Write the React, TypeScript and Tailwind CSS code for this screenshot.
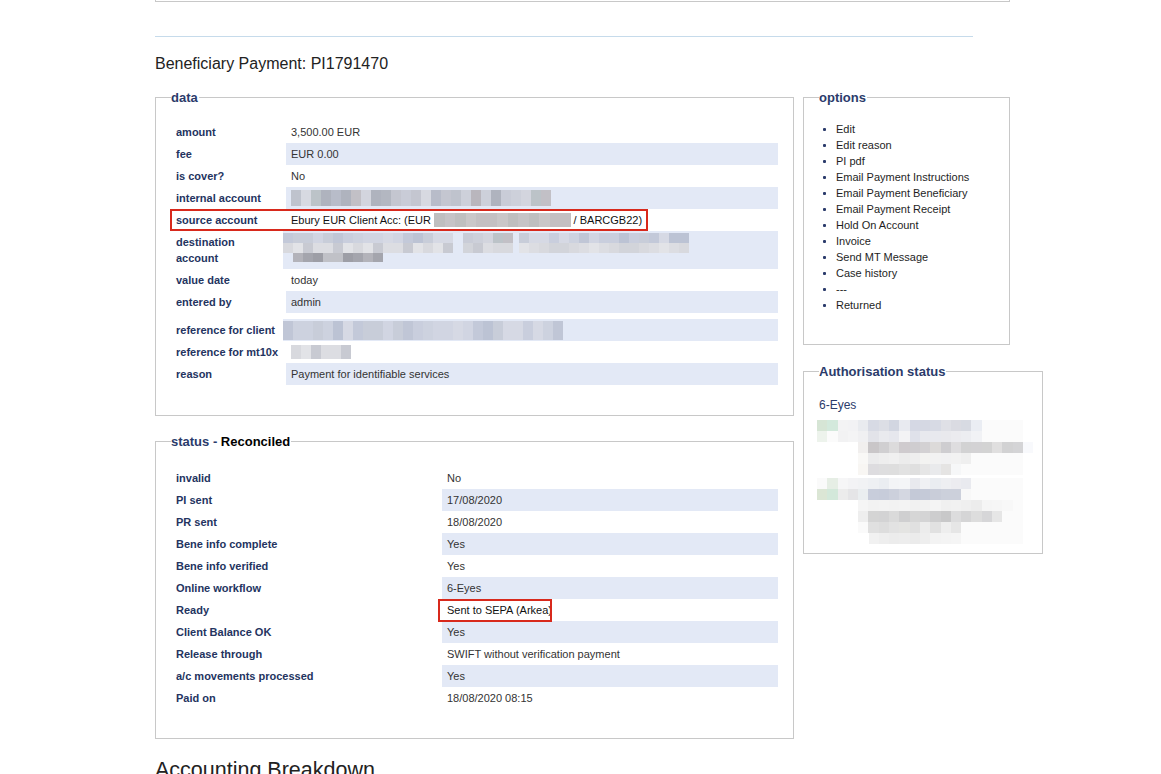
import React from 'react'

const greys = ['#c9ccd7', '#b8bcc9', '#d3d5de', '#bfc3cd', '#b3b7c1', '#bcc3c8', '#cdd0da', '#c4c6d0', '#afb3be', '#d7d9e1', '#c2c0c6', '#b9b6bd']
const blues = ['#c9cedd', '#c3c9d9', '#d1d5e2', '#bcc3d4', '#cdd2df', '#d6d9e4', '#c0c6d6', '#c8cdd9']
const warm = ['#c4c0c2', '#bdbabb', '#cac7c8', '#b7b6b9', '#d0cecf', '#c6c4c6', '#bfbfbf']
const light = ['#dcdde2', '#d2d4da', '#c8cad2', '#d8d9de', '#e2e3e7']

// pixelated "redacted" strip
function Pix({ n, cw = 10, h = 14, seed = 0, colors = greys }: { n: number; cw?: number; h?: number; seed?: number; colors?: string[] }) {
  return (
    <span className="inline-flex align-middle">
      {Array.from({ length: n }, (_, i) => (
        <span key={i} style={{ width: cw, height: h, background: colors[(i * 5 + seed * 3 + ((i * i) % 7)) % colors.length] }} />
      ))}
    </span>
  )
}

const authRows: [number, string[]][] = [
  [0, ['#d6e5d5', '#d3e9dc', '#f3f3f4', '#f2f2f4', '#e9ebef', '#d7dae4', '#dcdee5', '#d2d6e1', '#e8eaf0', '#d5d8e4', '#d5d8e3', '#d7dae4', '#dfe0e6', '#dadbe2', '#d7dae2', '#eaedf3', '#fbfbfb', '#fbfbfb', '#fbfbfb', '#fbfbfb']],
  [0, ['#edf3ec', '#fbfbfb', '#f2f2f3', '#f4f4f5', '#f0f0f2', '#e2e3e9', '#e9eaee', '#e6e7ed', '#f3f3f5', '#dfe1ea', '#e8e9ee', '#e8e9ee', '#e9e9ed', '#ebebef', '#ecedf1', '#f1f2f5', '#fbfbfb', '#fbfbfb', '#fbfbfb', '#fbfbfb']],
  [4, ['#f1efee', '#c9c6c8', '#d0cfd1', '#dcdbdc', '#cfcbce', '#cfcdd0', '#d3d1d3', '#dcdad9', '#cecdd0', '#dedddf', '#d2d2d3', '#d3d2d4', '#d3d3d3', '#e0dfdf', '#d2d2d3', '#d4d4d6', '#f8f9fc']],
  [4, ['#f9f8f6', '#ebebec', '#eeeeee', '#f0f0f0', '#ececec', '#eeeeee', '#f3f3f1', '#f2f2f2', '#f1f1f2', '#f2f2f2', '#efefef', '#fbfbfb', '#fbfbfb', '#fbfbfb', '#fbfbfb', '#fbfbfb']],
  [4, ['#f8f6f3', '#dddcdf', '#dededf', '#dedede', '#e2e2e2', '#dfdfdf', '#e6e6e6', '#e9eaec', '#e5e4e3', '#f6f7f8', '#fbfbfb', '#fbfbfb', '#fbfbfb', '#fbfbfb', '#fbfbfb', '#fbfbfb']],
  [0, ['#fafafa', '#e6eee5', '#f6f6f7', '#f3f3f5', '#f1f2f4', '#eef0f3', '#eaedf1', '#f3f4f6', '#f4f5f7', '#e8e9ee', '#f0f1f4', '#eaedf1', '#eeeff2', '#ececf0', '#e9eaef', '#fbfbfb', '#fbfbfb', '#fbfbfb', '#fbfbfb', '#fbfbfb']],
  [0, ['#dbe6d5', '#d3e8da', '#ececec', '#e5e5e7', '#eaeef0', '#c8cddb', '#c7ccda', '#ccd0dc', '#d4d7e1', '#c4c9d7', '#c5cad8', '#c9cdd9', '#ccd0db', '#ccd0db', '#f8f8f8', '#fbfbfb', '#fbfbfb', '#fbfbfb', '#fbfbfb', '#fbfbfb']],
  [4, ['#f5f5f5', '#f2f2f2', '#f3f3f3', '#f2f2f2', '#f3f3f3', '#f1f1f1', '#f2f2f2', '#f4f4f4', '#f0f0f0', '#f1f1f1', '#efefef', '#ececec', '#f5f5f5', '#f6f6f6', '#f8f8f8', '#fbfbfb']],
  [4, ['#eeeeee', '#d4d4d4', '#d3d3d4', '#dadada', '#cfcfd0', '#d6d6d6', '#d4d4d5', '#cdcdce', '#c8c8c9', '#dcdcdd', '#d5d5d6', '#dddddd', '#d6d6d8', '#e6e6e6', '#fbfbfb', '#fbfbfb']],
  [4, ['#fafafa', '#e0e0e0', '#dddddd', '#e2e2e2', '#e4e4e2', '#e0e0e0', '#ececec', '#e1e1e1', '#eeeeee', '#e6e6e6', '#fbfbfb', '#fbfbfb', '#fbfbfb', '#fbfbfb', '#fbfbfb', '#fbfbfb']],
  [5, ['#f1f1f1', '#eeeeee', '#ececec', '#ededed', '#ebebeb', '#eeeeee', '#f3f3f3', '#f4f4f4', '#f5f5f5', '#fbfbfb', '#fbfbfb', '#fbfbfb', '#fbfbfb', '#fbfbfb', '#fbfbfb']],
]

const label = 'font-bold text-[#24345f]'
const val = 'text-[#333]'

function Row({ name, hl, children, labelW }: { name: string; hl?: boolean; children?: React.ReactNode; labelW: string }) {
  return (
    <div className="flex h-[22px]">
      <div className={`${labelW} shrink-0 flex items-center ${label}`}>{name}</div>
      <div className={`flex-1 flex items-center pl-[5px] ${val} ${hl ? 'bg-[#e3e9f6]' : ''}`}>{children}</div>
    </div>
  )
}

const statusRows: [string, string][] = [
  ['invalid', 'No'],
  ['PI sent', '17/08/2020'],
  ['PR sent', '18/08/2020'],
  ['Bene info complete', 'Yes'],
  ['Bene info verified', 'Yes'],
  ['Online workflow', '6-Eyes'],
  ['Ready', 'Sent to SEPA (Arkea)'],
  ['Client Balance OK', 'Yes'],
  ['Release through', 'SWIFT without verification payment'],
  ['a/c movements processed', 'Yes'],
  ['Paid on', '18/08/2020 08:15'],
]

const options = ['Edit', 'Edit reason', 'PI pdf', 'Email Payment Instructions', 'Email Payment Beneficiary', 'Email Payment Receipt', 'Hold On Account', 'Invoice', 'Send MT Message', 'Case history', '---', 'Returned']

export default function App() {
  const lw = 'w-[110px]'
  const sw = 'w-[266px]'
  return (
    <div className="min-h-screen bg-white font-['Liberation_Sans',Arial,sans-serif] text-[11px] overflow-hidden">
      <div className="pl-[155px]">
        <div className="w-[855px] h-[2px] border-x border-b border-[#c8c8c8]" />
        <div className="mt-[34px] h-px w-[818px] bg-[#c6dbeb]" />
        <h1 className="mt-[18px] text-[16px] leading-[18px] text-[#222]">Beneficiary Payment: PI1791470</h1>

        <div className="flex mt-[17px] items-start">
          <div className="w-[639px] shrink-0">
            <fieldset className="border border-[#c8c8c8] pl-[20px] pr-[15px] pt-[16px] pb-[30px] min-w-0">
              <legend className="ml-[-5px] pr-[1px] text-[13px] leading-[15px] font-bold text-[#2b3b6b]">data</legend>
              <Row labelW={lw} name="amount">3,500.00 EUR</Row>
              <Row labelW={lw} name="fee" hl>EUR 0.00</Row>
              <Row labelW={lw} name="is cover?">No</Row>
              <Row labelW={lw} name="internal account" hl>
                <Pix n={26} h={16} seed={1} />
              </Row>
              <div className="relative">
                <Row labelW={lw} name="source account">
                  <span className="text-[#111] whitespace-nowrap flex items-center">
                    Ebury EUR Client Acc: (EUR&nbsp;
                    <Pix n={13} cw={10.5} h={14} seed={2} colors={warm} />
                    &nbsp;/ BARCGB22)
                  </span>
                </Row>
                <div className="absolute left-[-6px] top-0 w-[478px] h-[22px] border-2 border-[#d8291c]" />
              </div>
              <div className="flex h-[38px]">
                <div className={`${lw} shrink-0 py-[3px] leading-[16px] ${label}`}>
                  destination
                  <br />
                  account
                </div>
                <div className="flex-1 bg-[#e3e9f6] pt-[2px] pl-0 ml-[-3px]">
                  <div className="flex">
                    <Pix n={17} h={10} seed={3} colors={blues} />
                    <span className="w-[10px]" />
                    <Pix n={5} h={10} seed={4} colors={greys} />
                    <span className="w-[6px]" />
                    <Pix n={17} h={10} seed={5} colors={blues} />
                  </div>
                  <div className="flex">
                    <Pix n={17} h={10} seed={6} colors={light} />
                    <span className="w-[10px]" />
                    <Pix n={5} h={10} seed={7} colors={light} />
                    <span className="w-[6px]" />
                    <Pix n={17} h={10} seed={8} colors={light} />
                  </div>
                  <div className="flex pl-[10px]">
                    <Pix n={9} h={9} seed={9} colors={['#a9a9b1', '#9d9ea6', '#b3b3ba', '#a4a5ad', '#c0c1c7']} />
                  </div>
                </div>
              </div>
              <Row labelW={lw} name="value date">today</Row>
              <Row labelW={lw} name="entered by" hl>admin</Row>
              <div className="h-[6px]" />
              <div className="flex h-[22px]">
                <div className={`${lw} shrink-0 flex items-center ${label}`}>reference for client</div>
                <div className="flex-1 flex items-center bg-[#e3e9f6] ml-[-3px]">
                  <Pix n={28} h={19} seed={10} colors={blues} />
                </div>
              </div>
              <Row labelW={lw} name="reference for mt10x">
                <Pix n={6} h={14} seed={11} colors={light} />
              </Row>
              <Row labelW={lw} name="reason" hl>Payment for identifiable services</Row>
            </fieldset>

            <fieldset className="mt-[18px] border border-[#c8c8c8] pl-[20px] pr-[15px] pt-[18px] pb-[29px] min-w-0">
              <legend className="ml-[-5px] pr-[1px] text-[13px] leading-[15px] font-bold text-[#2b3b6b]">
                status - <span className="text-black">Reconciled</span>
              </legend>
              {statusRows.map(([k, v], i) =>
                k === 'Ready' ? (
                  <div key={k} className="relative">
                    <Row labelW={sw} name={k} hl={i % 2 === 1}>
                      <span className="text-[#111]">{v}</span>
                    </Row>
                    <div className="absolute left-[262px] top-0 w-[114px] h-[23px] border-2 border-[#d8291c]" />
                  </div>
                ) : (
                  <Row key={k} labelW={sw} name={k} hl={i % 2 === 1}>
                    {v}
                  </Row>
                ),
              )}
            </fieldset>

            <h2 className="mt-[19px] text-[21.5px] leading-[25px] text-[#222]">Accounting Breakdown</h2>
          </div>

          <div className="ml-[9px] flex flex-col">
            <fieldset className="w-[207px] border border-[#c8c8c8] pl-[15px] pt-[16px] pb-[31px] min-w-0">
              <legend className="pr-[1px] text-[13px] leading-[15px] font-bold text-[#2b3b6b]">options</legend>
              <ul>
                {options.map(o => (
                  <li key={o} className="flex items-center h-[16px] text-[#1e1e1e]">
                    <span className="ml-[4px] mr-[10px] w-[3px] h-[3px] bg-[#2b3b6b] rounded-[1px]" />
                    {o}
                  </li>
                ))}
              </ul>
            </fieldset>

            <fieldset className="mt-[19px] w-[240px] border border-[#c8c8c8] pl-[15px] pt-[19px] pb-[9px] min-w-0">
              <legend className="pr-[1px] text-[13px] leading-[15px] font-bold text-[#2b3b6b]">Authorisation status</legend>
              <div className="text-[12px] leading-[14px] text-[#2b3b6b]">6-Eyes</div>
              <div className="mt-[8px] ml-[-2px] flex flex-col">
                {authRows.map(([off, cs], r) => (
                  <div key={r} className={`flex ${r === 5 ? 'mt-[3px]' : ''}`}>
                    <span style={{ width: off * 10.3 }} />
                    {cs.map((c, i) => (
                      <span key={i} style={{ width: 10.3, height: 11, background: c }} />
                    ))}
                  </div>
                ))}
              </div>
            </fieldset>
          </div>
        </div>
      </div>
    </div>
  )
}
